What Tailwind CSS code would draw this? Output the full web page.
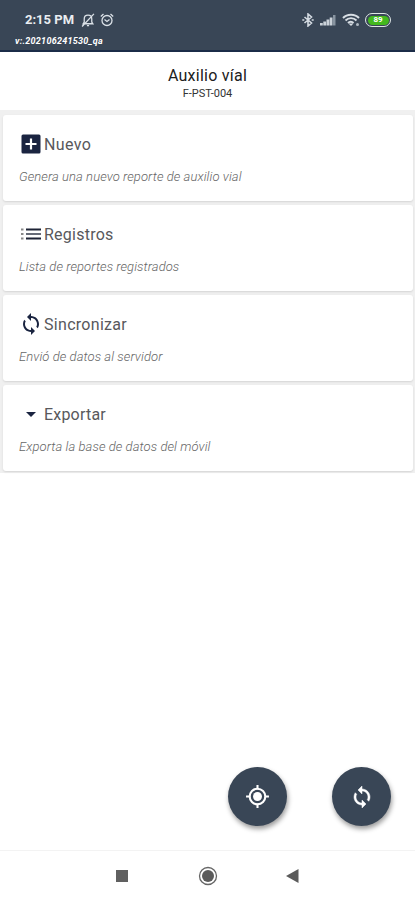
<!DOCTYPE html>
<html lang="es">
<head>
<meta charset="utf-8">
<title>Auxilio víal</title>
<script src="https://cdn.jsdelivr.net/npm/@tailwindcss/browser@4"></script>
</head>
<body class="bg-white font-['Roboto',sans-serif]">
<svg class="hidden">
  <symbol id="sync" viewBox="0 0 24 24"><path fill="currentColor" d="M12 4V1L8 5l4 4V6c3.31 0 6 2.69 6 6 0 1.01-.25 1.97-.7 2.8l1.46 1.46C19.54 15.03 20 13.57 20 12c0-4.42-3.58-8-8-8zm0 14c-3.31 0-6-2.69-6-6 0-1.01.25-1.97.7-2.8L5.24 7.74C4.46 8.97 4 10.43 4 12c0 4.42 3.58 8 8 8v3l4-4-4-4v3z"/></symbol>
</svg>
<div class="flex h-[900px] w-[415px] flex-col overflow-hidden">
  <header class="h-[52px] shrink-0 border-b-2 border-[#1b2c48] bg-[#394656] text-white">
    <div class="flex h-[34px] items-center pt-[6px] pr-[24px] pl-[25px]">
      <span class="w-[56px] text-[13px] font-bold whitespace-nowrap text-[#e9edf1]">2:15 PM</span>
      <svg class="size-[14px]" viewBox="0 0 13 13" fill="none" stroke="#dbe1e7" stroke-width="1.2"><path d="M2 10h9L10 8.500V5.500C10 3.500 8.500 2 6.500 2S3 3.500 3 5.500v3zM5.500 11.800h2M1 12.500L12 .8"/></svg>
      <svg class="ml-[5px] size-[14px]" viewBox="0 0 14 14" fill="none" stroke="#dbe1e7" stroke-width="1.300"><circle cx="7" cy="7.500" r="5"/><path d="M4.500 6.500L7 8.500l2.500-2M.8 3.500L3.500 1M13.200 3.500L10.500 1"/></svg>
      <svg class="ml-auto h-[14px] w-[12px]" viewBox="0 0 12 14" fill="none" stroke="#d3dae1" stroke-width="1.600"><path d="M2.500 4l7 6L6 13V1l3.500 3-7 6M.3 7h2M9.700 7h2"/></svg>
      <svg class="ml-[6px] h-[12px] w-[16px]" viewBox="0 0 16 12" fill="#cbd2d9"><path d="M0 9h2.800v2.500H0zM3.300 7.500h2.800v4H3.300zM6.500 5.500h2.800v6H6.500zM9.700 3.500h2.800v8H9.700z"/><path fill="#8995a1" d="M13 1h2.500v10.500H13z"/></svg>
      <svg class="ml-[6px] h-[14px] w-[18px]" viewBox="0 0 18 14" fill="none" stroke="#d8dee4" stroke-width="1.900"><path d="M1 5c4-4.300 12-4.300 16 0M3.500 7.500c3-3.200 8-3.200 11 0M6 10c1.500-1.700 4-1.700 5.500 0"/><path fill="#d8dee4" stroke="none" d="M6.500 10.500h5L9 13z"/><circle cx="15.500" cy="11.500" r="1.500" fill="#aeb8c1" stroke="none"/></svg>
      <span class="ml-[5px] flex h-[14px] w-[26px] items-center justify-center rounded-full border-[1.500px] border-[#dfe6e6] p-[1.500px]"><span class="flex h-full w-full items-center justify-center rounded-full bg-[#43b81e] text-[8px] font-bold text-white">89</span></span>
    </div>
    <p class="pt-px pl-[15px] text-[9px] leading-[13px] font-bold tracking-[0.27px] italic">v:.202106241530_qa</p>
  </header>
  <div class="flex h-[58px] shrink-0 flex-col items-center pt-[13px]">
    <h1 class="text-[16px] leading-[21px] tracking-[0.25px] text-[#202020]">Auxilio víal</h1>
    <p class="text-[11px] leading-[15px] tracking-[0px] text-[#333]">F-PST-004</p>
  </div>
  <main class="flex h-[363px] shrink-0 flex-col gap-[4px] bg-[#f0f0f0] pt-[5px] pr-[2px] pl-[3px] text-[#58585c]">
    <section class="h-[86px] rounded-[3px] bg-white pt-[17px] pl-[16px] shadow-[0_1px_2px_#d4d4d4]">
      <div class="flex h-[24px] items-center"><svg class="size-[24px]" viewBox="0 0 24 24"><path fill="#1a2440" d="M4 2.500h16q1.500 0 1.500 1.500v16q0 1.500-1.500 1.500H4q-1.500 0-1.500-1.500V4q0-1.500 1.500-1.500z"/><path stroke="#fff" stroke-width="2.200" d="M12 6.500v11M6.500 12h11"/></svg><h2 class="pt-px pl-px text-[16px] tracking-[0.35px]">Nuevo</h2></div>
      <p class="mt-[11px] text-[13px] leading-[20px] font-light tracking-[0.08px] text-[#666] italic">Genera una nuevo reporte de auxilio vial</p>
    </section>
    <section class="h-[86px] rounded-[3px] bg-white pt-[17px] pl-[16px] shadow-[0_1px_2px_#d4d4d4]">
      <div class="flex h-[24px] items-center"><svg class="size-[24px]" viewBox="0 0 24 24"><path fill="#1d2335" d="M7 6.500h15v2H7zM7 15.500h15v2H7z"/><path fill="#666b77" d="M7 11h15v2H7z"/><path fill="#888" d="M2 6.500h2.500v2H2zM2 11h2.500v2H2zM2 15.500h2.500v2H2z"/></svg><h2 class="pt-px pl-px text-[16px] tracking-[0.25px]">Registros</h2></div>
      <p class="mt-[11px] text-[13px] leading-[20px] font-light tracking-[0.08px] text-[#666] italic">Lista de reportes registrados</p>
    </section>
    <section class="h-[86px] rounded-[3px] bg-white pt-[17px] pl-[16px] shadow-[0_1px_2px_#d4d4d4]">
      <div class="flex h-[24px] items-center"><svg class="size-[24px] text-[#1a2440]"><use href="#sync"/></svg><h2 class="pt-px pl-px text-[16px] tracking-[0.3px]">Sincronizar</h2></div>
      <p class="mt-[11px] text-[13px] leading-[20px] font-light tracking-[0.08px] text-[#666] italic">Envió de datos al servidor</p>
    </section>
    <section class="h-[86px] rounded-[3px] bg-white pt-[17px] pl-[16px] shadow-[0_1px_2px_#d4d4d4]">
      <div class="flex h-[24px] items-center"><svg class="size-[24px]" viewBox="0 0 24 24"><path fill="#1a2440" d="M7 10h10l-5 5z"/></svg><h2 class="pt-px pl-px text-[16px] tracking-[0.2px]">Exportar</h2></div>
      <p class="mt-[11px] text-[13px] leading-[20px] font-light tracking-[0.08px] text-[#666] italic">Exporta la base de datos del móvil</p>
    </section>
  </main>
  <div class="flex flex-1 items-end justify-end gap-[45px] pr-[24px] pb-[24px] text-white">
    <button class="flex size-[59px] items-center justify-center rounded-full bg-[#394656] shadow-[1px_3px_5px_#0006]"><svg class="size-[25px]" viewBox="0 0 24 24" fill="none" stroke="currentColor" stroke-width="2"><circle cx="12" cy="12" r="7.500"/><circle cx="12" cy="12" r="4.300" fill="currentColor" stroke="none"/><path d="M12 1v4M12 19v4M1 12h4M19 12h4"/></svg></button>
    <button class="flex size-[59px] items-center justify-center rounded-full bg-[#394656] shadow-[1px_3px_5px_#0006]"><svg class="size-[24px]"><use href="#sync" stroke="currentColor" stroke-width=".5"/></svg></button>
  </div>
  <nav class="flex h-[50px] shrink-0 items-center border-t border-[#f3f3f3] pl-[116px]">
    <span class="size-[12px] bg-[#606060]"></span>
    <svg class="ml-[70px] size-[20px]" viewBox="0 0 20 20"><circle cx="10" cy="10" r="8.500" fill="none" stroke="#666" stroke-width="1.300"/><circle cx="10" cy="10" r="6" fill="#5b5b5b"/></svg>
    <svg class="ml-[68px] h-[14px] w-[13px]" viewBox="0 0 13 14"><path fill="#5b5b5b" d="M12.500 0v14L0 7z"/></svg>
  </nav>
</div>
</body>
</html>
